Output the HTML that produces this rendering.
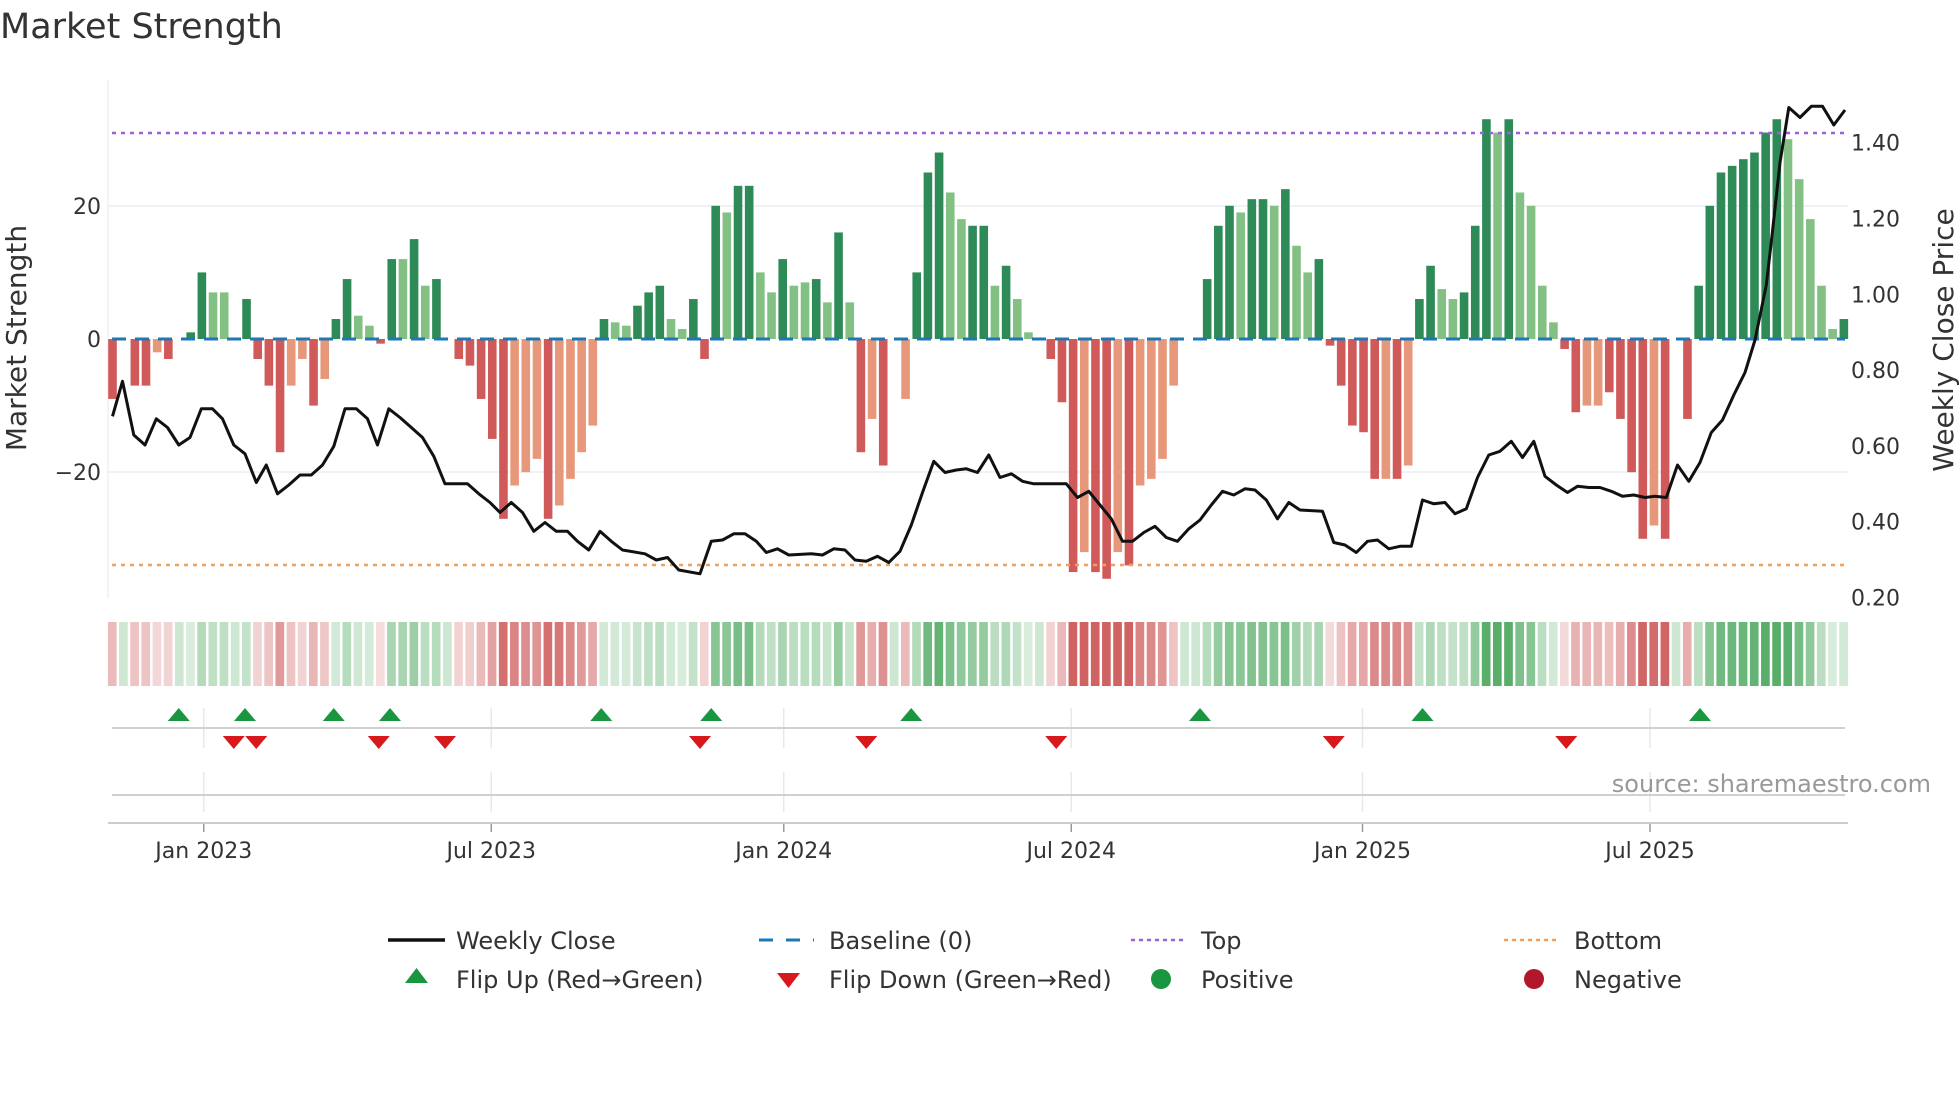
<!DOCTYPE html>
<html><head><meta charset="utf-8">
<style>
html,body{margin:0;padding:0;background:#fff;}
svg{display:block;font-family:"DejaVu Sans","Liberation Sans",sans-serif;}
</style></head>
<body>
<svg id="s" width="1960" height="1102" viewBox="0 0 1960 1102" xmlns="http://www.w3.org/2000/svg">
<text x="0" y="38" font-size="35" fill="#333">Market Strength</text>
<g id="g"></g>
</svg>
<script>
const S=1.25, NS="http://www.w3.org/2000/svg", g=document.getElementById('g');
function el(t,a,txt){const e=document.createElementNS(NS,t);for(const k in a)e.setAttribute(k,a[k]);if(txt!==undefined)e.textContent=txt;g.appendChild(e);return e;}
const y0=339, pu=6.66;
const X0=112.5, P=11.17, BW=8.6;
el('line',{x1:108,x2:1848,y1:206,y2:206,stroke:'#eceff3','stroke-width':1.5});
el('line',{x1:108,x2:1848,y1:472,y2:472,stroke:'#eceff3','stroke-width':1.5});
el('line',{x1:108,x2:108,y1:80,y2:598,stroke:'#eef0f3','stroke-width':1.5});
const B=[[90,-9,'d'],[99,0,'z'],[108,-7,'d'],[116,-7,'d'],[125,-2,'l'],[134,-3,'d'],[143,0,'z'],[152,1,'d'],[161,10,'d'],[169,7,'l'],[178,7,'l'],[187,0,'z'],[196,6,'d'],[205,-3,'d'],[213,-7,'d'],[222,-17,'d'],[231,-7,'l'],[240,-3,'l'],[249,-10,'d'],[258,-6,'l'],[267,3,'d'],[276,9,'d'],[285,3.5,'l'],[294,2,'l'],[302,-0.7,'d'],[311,12,'d'],[320,12,'l'],[329,15,'d'],[338,8,'l'],[347,9,'d'],[356,0,'z'],[365,-3,'d'],[374,-4,'d'],[383,-9,'d'],[392,-15,'d'],[400,-27,'d'],[409,-22,'l'],[418,-20,'l'],[427,-18,'l'],[436,-27,'d'],[445,-25,'l'],[454,-21,'l'],[462,-17,'l'],[471,-13,'l'],[480,3,'d'],[489,2.5,'l'],[498,2,'l'],[507,5,'d'],[516,7,'d'],[525,8,'d'],[534,3,'l'],[543,1.5,'l'],[551,6,'d'],[560,-3,'d'],[569,20,'d'],[578,19,'l'],[587,23,'d'],[596,23,'d'],[605,10,'l'],[613,7,'l'],[622,12,'d'],[631,8,'l'],[640,8.5,'l'],[649,9,'d'],[658,5.5,'l'],[667,16,'d'],[676,13,'l'],[684,5.5,'l'],[693,-17,'d'],[702,-12,'l'],[711,-19,'d'],[720,-9,'l'],[729,10,'d'],[738,25,'d'],[747,28,'d'],[756,22,'l'],[765,20,'l'],[773,18,'l'],[782,17,'d'],[791,17,'d'],[800,8,'l'],[809,11,'d'],[818,6,'l'],[827,1,'l'],[836,0,'z'],[845,-3,'d'],[853,-9.5,'d'],[862,-35,'d'],[871,-32,'l'],[880,-35,'d'],[889,-36,'d'],[898,-32,'l'],[906,-34,'d'],[915,-22,'l'],[924,-21,'l'],[933,-18,'l'],[942,-7,'l'],[951,0,'z'],[960,0,'z'],[969,9,'d'],[978,17,'d'],[987,20,'d'],[996,19,'l'],[1004,21,'d'],[1013,21,'d'],[1022,20,'l'],[1031,22.5,'d'],[1040,14,'l'],[1049,10,'l'],[1058,12,'d'],[1067,-1,'d'],[1076,-7,'d'],[1085,-13,'d'],[1094,-14,'d'],[1102,-21,'d'],[1111,-21,'l'],[1120,-21,'d'],[1129,-19,'l'],[1138,6,'d'],[1147,11,'d'],[1156,7.5,'l'],[1164,6,'l'],[1173,7,'d'],[1182,17,'d'],[1191,33,'d'],[1200,31,'l'],[1209,33,'d'],[1218,22,'l'],[1227,20,'l'],[1236,8,'l'],[1245,2.5,'l'],[1254,-1.5,'d'],[1262,-11,'d'],[1271,-10,'l'],[1280,-10,'l'],[1289,-8,'d'],[1298,-12,'d'],[1307,-20,'d'],[1316,-30,'d'],[1324,-28,'l'],[1333,-30,'d'],[1342,0,'z'],[1351,-12,'d'],[1360,8,'d'],[1369,20,'d'],[1378,25,'d'],[1387,26,'d'],[1396,27,'d'],[1404,28,'d'],[1413,31,'d'],[1422,33,'d'],[1431,30,'l'],[1440,24,'l'],[1449,18,'l'],[1458,8,'l'],[1467,1.5,'l'],[1476,3,'d']];
const vals=new Array(156).fill(null);
B.forEach(b=>{let i=Math.round((b[0]-90)/8.936);if(i>155)i=155;vals[i]=b;});
const col={d:['#2e8b57','#d05a5a'],l:['#82c183','#e8987a']};
for(let i=0;i<156;i++){const b=vals[i];const x=X0+i*P-BW/2;
 if(b&&b[2]!=='z'){const v=b[1];const h=Math.abs(v)*pu;const c=col[b[2]][v>0?0:1];
  el('rect',{x:x,y:v>0?y0-h:y0,width:BW,height:h,fill:c});}
 let v=b?b[1]:0;let a=Math.min(1,0.2+Math.abs(v)/38);
 let c=v>=0?`rgba(60,160,80,${a*0.85})`:`rgba(200,70,70,${a*0.85})`;
 if(v===0)c='rgba(60,160,80,0.25)';
 el('rect',{x:X0+i*P-P/2+1,y:622,width:P-2.5,height:64,fill:c});
}
el('line',{x1:112,x2:1845,y1:y0,y2:y0,stroke:'#1f77b4','stroke-width':3,'stroke-dasharray':'14,9'});
el('line',{x1:112,x2:1845,y1:133,y2:133,stroke:'#9b62d8','stroke-width':2.5,'stroke-dasharray':'4,5'});
el('line',{x1:112,x2:1845,y1:565,y2:565,stroke:'#f0a05a','stroke-width':2.5,'stroke-dasharray':'4,5'});
const L=[[90,333],[98,305],[107,348],[116,356],[125,335],[134,342],[143,356],[152,350],[161,327],[170,327],[178,335],[187,356],[196,363],[205,386],[213,372],[222,395],[231,388],[240,380],[249,380],[258,372],[267,357],[276,327],[285,327],[294,335],[302,356],[311,327],[320,334],[329,342],[338,350],[347,365],[356,387],[374,387],[383,395],[392,402],[400,410],[409,402],[418,410],[427,425],[436,418],[445,425],[454,425],[462,433],[471,440],[480,425],[489,433],[498,440],[516,443],[525,448],[534,446],[543,456],[560,459],[569,433],[578,432],[587,427],[596,427],[605,433],[613,442],[622,439],[631,444],[649,443],[658,444],[667,439],[676,440],[684,448],[693,449],[702,445],[711,450],[720,441],[729,420],[738,394],[747,369],[756,378],[765,376],[773,375],[782,378],[791,364],[800,382],[809,379],[818,385],[827,387],[853,387],[862,398],[871,393],[880,404],[889,415],[898,433],[906,433],[915,426],[924,421],[933,430],[942,433],[951,423],[960,416],[969,404],[978,393],[987,396],[996,391],[1004,392],[1013,400],[1022,415],[1031,402],[1040,408],[1058,409],[1067,434],[1076,436],[1085,442],[1094,433],[1102,432],[1111,439],[1120,437],[1129,437],[1138,400],[1147,403],[1156,402],[1164,411],[1173,407],[1182,382],[1191,364],[1200,361],[1209,353],[1218,366],[1227,353],[1236,381],[1245,388],[1254,394],[1262,389],[1271,390],[1280,390],[1289,393],[1298,397],[1307,396],[1316,398],[1324,397],[1333,398],[1342,372],[1351,385],[1360,370],[1369,346],[1378,336],[1387,316],[1396,298],[1404,272],[1413,228],[1418,185],[1424,130],[1431,86],[1440,94],[1449,85],[1458,85],[1467,100],[1476,88]];
el('polyline',{points:L.map(p=>(p[0]*S).toFixed(1)+','+(p[1]*S).toFixed(1)).join(' '),fill:'none',stroke:'#111','stroke-width':3,'stroke-linejoin':'round'});
[[206,'20'],[339,'0'],[472,'−20']].forEach(t=>el('text',{x:101,y:t[0]+8,'font-size':22,fill:'#333','text-anchor':'end'},t[1]));
[1.4,1.2,1.0,0.8,0.6,0.4,0.2].forEach(p=>el('text',{x:1851,y:597.5-(p-0.2)*379+8,'font-size':22,fill:'#333'},p.toFixed(2)));
el('text',{x:0,y:0,'font-size':28,fill:'#333','text-anchor':'middle',transform:'translate(26,338) rotate(-90)'},'Market Strength');
el('text',{x:0,y:0,'font-size':28,fill:'#333','text-anchor':'middle',transform:'translate(1953,340) rotate(-90)'},'Weekly Close Price');
const ticks=[[163,'Jan 2023'],[393,'Jul 2023'],[627,'Jan 2024'],[857,'Jul 2024'],[1090,'Jan 2025'],[1320,'Jul 2025']];
ticks.forEach(t=>{const x=t[0]*S;
 el('line',{x1:x,x2:x,y1:708,y2:748,stroke:'#e6e8f0','stroke-width':1.5});
 el('line',{x1:x,x2:x,y1:772,y2:812,stroke:'#e6e8f0','stroke-width':1.5});
 el('line',{x1:x,x2:x,y1:822,y2:832,stroke:'#999','stroke-width':1.5});
 el('text',{x:x,y:858,'font-size':22,fill:'#333','text-anchor':'middle'},t[1]);});
el('line',{x1:112,x2:1845,y1:728,y2:728,stroke:'#d0d0d0','stroke-width':2});
el('line',{x1:112,x2:1845,y1:795,y2:795,stroke:'#d0d0d0','stroke-width':2});
el('line',{x1:108,x2:1848,y1:823,y2:823,stroke:'#ccc','stroke-width':2});
[143,196,267,312,481,569,729,960,1138,1360].forEach(x=>{x*=S;el('polygon',{points:`${x-11},${721} ${x+11},${721} ${x},${708}`,fill:'#1a9641'});});
[187,205,303,356,560,693,845,1067,1253].forEach(x=>{x*=S;el('polygon',{points:`${x-11},${736} ${x+11},${736} ${x},${749}`,fill:'#d7191c'});});
el('text',{x:1931,y:792,'font-size':24,fill:'#999','text-anchor':'end'},'source: sharemaestro.com');
const r1=940,r2=979,fs=24;
el('line',{x1:388,x2:445,y1:r1,y2:r1,stroke:'#111','stroke-width':3.5});
el('text',{x:456,y:r1+9,'font-size':fs,fill:'#333'},'Weekly Close');
el('line',{x1:759,x2:814,y1:r1,y2:r1,stroke:'#1f77b4','stroke-width':3,'stroke-dasharray':'14,13'});
el('text',{x:829,y:r1+9,'font-size':fs,fill:'#333'},'Baseline (0)');
el('line',{x1:1131,x2:1186,y1:r1,y2:r1,stroke:'#9b62d8','stroke-width':2.5,'stroke-dasharray':'4,4'});
el('text',{x:1201,y:r1+9,'font-size':fs,fill:'#333'},'Top');
el('line',{x1:1504,x2:1559,y1:r1,y2:r1,stroke:'#f0a05a','stroke-width':2.5,'stroke-dasharray':'4,4'});
el('text',{x:1574,y:r1+9,'font-size':fs,fill:'#333'},'Bottom');
el('polygon',{points:'405,983 428,983 416.5,968',fill:'#1a9641'});
el('text',{x:456,y:r2+9,'font-size':fs,fill:'#333'},'Flip Up (Red→Green)');
el('polygon',{points:'777,973 800,973 788.5,988',fill:'#d7191c'});
el('text',{x:829,y:r2+9,'font-size':fs,fill:'#333'},'Flip Down (Green→Red)');
el('circle',{cx:1161,cy:r2,r:10,fill:'#1a9641'});
el('text',{x:1201,y:r2+9,'font-size':fs,fill:'#333'},'Positive');
el('circle',{cx:1534,cy:r2,r:10,fill:'#b2182b'});
el('text',{x:1574,y:r2+9,'font-size':fs,fill:'#333'},'Negative');
</script>
</body></html>
